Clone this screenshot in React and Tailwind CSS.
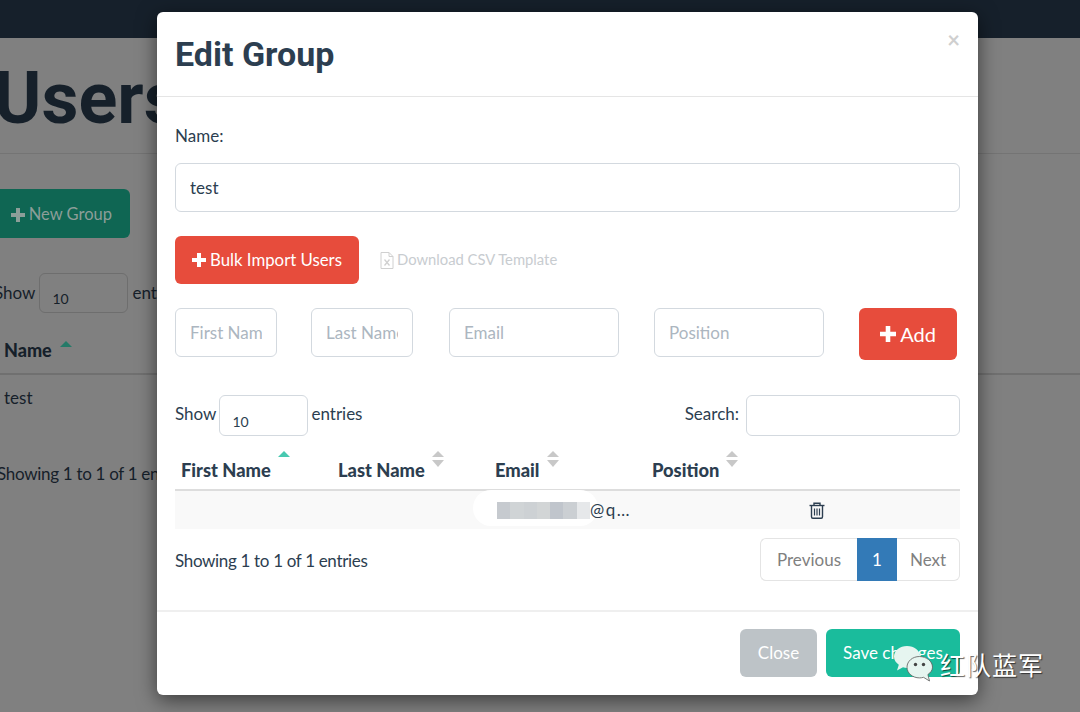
const PlusIcon = ({ size = 14 }) => (
  <svg width={size} height={size} viewBox="0 0 14 14" className="shrink-0">
    <path d="M5 0h4v5h5v4H9v5H5V9H0V5h5z" fill="currentColor" />
  </svg>
);

const FileIcon = () => (
  <svg width="14" height="17" viewBox="0 0 14 17" className="shrink-0" fill="none" stroke="#d0d0d0">
    <path d="M1 .5h8l4 4v12H1z" />
    <path d="M9 .5v4h4" />
    <path d="M4.500 7.500l5 6M9.500 7.500l-5 6" strokeWidth="1.300" />
  </svg>
);

const TrashIcon = () => (
  <svg width="16" height="17" viewBox="0 0 16 17" fill="none" stroke="#2c3e50" strokeWidth="1.400">
    <path d="M.5 3.500h15" />
    <path d="M5 3.500V1.200h6v2.300" />
    <path d="M2.500 3.500v11.300c0 .8.5 1.500 1.300 1.500h8.400c.8 0 1.300-.7 1.300-1.500V3.500" />
    <path d="M5.500 6.500v7M8 6.500v7M10.500 6.500v7" strokeWidth="1.200" />
  </svg>
);

const SortIcon = ({ active }) => (
  <svg width="14" height="18" viewBox="0 0 14 18" className="shrink-0">
    <path d="M7 1l6 6H1z" fill={active ? "#48c9b0" : "#c8c8c8"} />
    {!active && <path d="M7 17L1 10h12z" fill="#c8c8c8" />}
  </svg>
);

const WeChatIcon = () => (
  <svg width="40" height="38" viewBox="0 0 40 38">
    <path d="M14 1C7 1 1 5.600 1 11.600c0 3.400 1.900 6.200 4.800 8.200L4 25.500l6-3.200c1.400.4 2.600.6 4 .6 7.200 0 13-5 13-11.300S21.200 1 14 1z" fill="#e6f5f0" />
    <path d="M26.500 11.500c-7 0-12.500 4.700-12.500 10.700s5.500 10.700 12.500 10.700c1.400 0 2.800-.2 4-.6L36.500 36l-1.600-6.500c2.800-1.800 4.600-4.400 4.600-7.300 0-6-6-10.700-13-10.700z" fill="#e6f5f0" stroke="#5a5a5a" strokeWidth=".8" />
    <circle cx="22.500" cy="19.500" r="1.700" fill="#444" />
    <circle cx="30.500" cy="19.500" r="1.700" fill="#444" />
  </svg>
);

const TextInput = ({ placeholder, className }) => (
  <input
    placeholder={placeholder}
    className={`h-[49px] rounded-md border-[1.5px] border-[#d3d9df] bg-white px-[14px] text-[17px] text-[#2c3e50] outline-none placeholder:text-[#acb6c0] ${className}`}
  />
);

const PageBehind = () => (
  <div className="h-[712px] overflow-hidden bg-[#808080] text-[#16202a]">
    <div className="h-[38px] bg-[#16202b]" />
    <h1 className="ml-[-6px] mt-[20px] h-[95px] font-['Roboto',sans-serif] text-[72px] font-bold leading-[82px]">
      Users
    </h1>
    <div className="h-px bg-[#747474]" />
    <div className="mt-[35px] flex h-[49px] w-[130px] items-center justify-end gap-[4px] rounded-r-md bg-[#0f6653] pr-[18px] pt-[2px] text-[16.5px] text-[#8c9e99]">
      <PlusIcon />
      <span>New Group</span>
    </div>
    <div className="ml-[-6px] mt-[35px] flex items-center gap-[4px] text-[17px]">
      <span>Show</span>
      <div className="flex h-[40px] w-[89px] items-end rounded-md border-[1.5px] border-[#6e6e6e] pb-[3px] pl-[12px] text-[14px]">10</div>
      <span>entries</span>
    </div>
    <div className="ml-[4px] mt-[19px] flex h-[41px] items-end pb-[14px] font-black">
      <span className="text-[18px] leading-none">Name</span>
      <svg width="14" height="7" viewBox="0 0 14 7" className="mb-[11px] ml-[7px]">
        <path d="M7 0l6 6H1z" fill="#257a68" />
      </svg>
    </div>
    <div className="h-[2px] bg-[#707070]" />
    <div className="ml-[4px] mt-[11px] text-[17px] leading-[24px]">test</div>
    <div className="ml-[-3px] mt-[52px] text-[17px] leading-[24px] tracking-[-0.3px]">Showing 1 to 1 of 1 entries</div>
  </div>
);

const columns = ["First Name", "Last Name", "Email", "Position", ""];

const Modal = () => (
  <div className="absolute left-[157px] top-[12px] flex h-[683px] w-[821px] flex-col rounded-md bg-white text-[#2c3e50] shadow-[0_5px_20px_rgba(0,0,0,0.55)]">
    <div className="relative h-[85px] shrink-0 border-b border-[#e5e5e5] px-[18px] pt-[19px]">
      <h2 className="font-['Roboto',sans-serif] text-[34px] font-bold leading-[46px]">Edit Group</h2>
      <span className="absolute right-[18px] top-[15px] text-[22px] font-bold leading-[26px] text-[#cfcfcf]">×</span>
    </div>

    <div className="flex flex-1 flex-col px-[18px]">
      <label className="mt-[27px] text-[17px] leading-[24px]">Name:</label>
      <input
        defaultValue="test"
        className="mt-[15px] h-[49px] rounded-md border-[1.5px] border-[#d3d9df] px-[14px] text-[17px] outline-none"
      />

      <div className="mt-[24px] flex items-center">
        <button className="flex h-[48px] w-[184px] items-center justify-center gap-[4px] rounded-md bg-[#e74c3c] text-[16.8px] text-white">
          <PlusIcon />
          Bulk Import Users
        </button>
        <span className="ml-[21px]"><FileIcon /></span>
        <span className="mb-[2px] ml-[3px] text-[14.8px] text-[#c8ccd0]">Download CSV Template</span>
      </div>

      <div className="mt-[24px] flex items-start">
        <TextInput placeholder="First Name" className="w-[102px]" />
        <TextInput placeholder="Last Name" className="ml-[34px] w-[102px]" />
        <TextInput placeholder="Email" className="ml-[36px] w-[170px]" />
        <TextInput placeholder="Position" className="ml-[35px] w-[170px]" />
        <button className="ml-[35px] flex h-[52px] w-[98px] items-center justify-center gap-[4px] rounded-md bg-[#e74c3c] text-[20px] text-white">
          <PlusIcon size={16} />
          Add
        </button>
      </div>

      <div className="mt-[35px] flex items-center justify-between text-[17px]">
        <div className="flex items-center gap-[3px]">
          <span className="mb-[3px]">Show</span>
          <div className="flex h-[41px] w-[89px] items-end rounded-md border-[1.5px] border-[#d3d9df] pb-[3px] pl-[12px] text-[14px]">10</div>
          <span className="mb-[3px]">entries</span>
        </div>
        <div className="flex items-center gap-[7px]">
          <span className="mb-[3px]">Search:</span>
          <input className="h-[41px] w-[214px] rounded-md border-[1.5px] border-[#d3d9df] outline-none" />
        </div>
      </div>

      <table className="mt-[14px] w-[785px] table-fixed border-collapse">
        <thead>
          <tr className="h-[40px] border-b-2 border-[#dddddd]">
            {columns.map((col, i) => (
              <th key={i} className="w-[157px] p-0 pl-[6px] text-left align-bottom text-[18.3px] font-black">
                {col && (
                  <div className="flex items-start pb-[7px]">
                    <span className="mt-[8px] leading-[24px]">{col}</span>
                    <span className="ml-[6px]"><SortIcon active={i === 0} /></span>
                  </div>
                )}
              </th>
            ))}
          </tr>
        </thead>
        <tbody>
          <tr className="h-[39px] bg-[#f9f9f9]">
            <td />
            <td />
            <td className="pl-[8px] text-[17px]">
              <div className="relative flex items-center">
                {/* blurred-out address */}
                <div className="absolute left-[-24px] top-[-7px] h-[36px] w-[125px] rounded-full bg-white" />
                <div className="relative flex h-[17px] w-[93px]">
                  <div className="flex-1 bg-[#c6cacf]" />
                  <div className="flex-1 bg-[#d0d4d6]" />
                  <div className="flex-1 bg-[#cdd1d4]" />
                  <div className="flex-1 bg-[#d2d5d6]" />
                  <div className="flex-1 bg-[#c0c5cc]" />
                  <div className="flex-1 bg-[#cbcfd3]" />
                  <div className="flex-1 bg-[#e6e8ea]" />
                </div>
                <span className="relative tracking-[1.5px]">@q…</span>
              </div>
            </td>
            <td />
            <td className="pl-[6px]">
              <TrashIcon />
            </td>
          </tr>
        </tbody>
      </table>

      <div className="mt-[9px] flex items-center justify-between text-[17px]">
        <span className="mt-[2px] tracking-[-0.33px]">Showing 1 to 1 of 1 entries</span>
        <div className="flex h-[43px] text-[#808080]">
          <span className="flex w-[97px] items-center justify-center rounded-l-md border-[1.5px] border-r-0 border-[#e4e4e4]">Previous</span>
          <span className="flex w-[40px] items-center justify-center bg-[#337ab7] text-white">1</span>
          <span className="flex w-[63px] items-center justify-center rounded-r-md border-[1.5px] border-l-0 border-[#e4e4e4]">Next</span>
        </div>
      </div>
    </div>

    <div className="flex h-[85px] shrink-0 items-start justify-end gap-[9px] border-t-2 border-[#efefef] px-[18px] pt-[17px] text-[17px] text-white">
      <button className="h-[48px] w-[77px] rounded-md bg-[#bdc3c7]">Close</button>
      <button className="h-[48px] w-[134px] rounded-md bg-[#1abc9c]">Save changes</button>
    </div>
  </div>
);

export default function App() {
  return (
    <div className="relative h-[712px] w-[1080px] overflow-hidden font-['Lato',sans-serif]">
      <PageBehind />
      <Modal />
      {/* watermark */}
      <div className="absolute left-[893px] top-[645px] flex items-center gap-[7px]">
        <WeChatIcon />
        <span className="font-['Noto_Sans_CJK_SC',sans-serif] text-[25px] leading-none tracking-[1px] text-white [text-shadow:1px_1px_1px_rgba(0,0,0,0.6)]">红队蓝军</span>
      </div>
    </div>
  );
}
